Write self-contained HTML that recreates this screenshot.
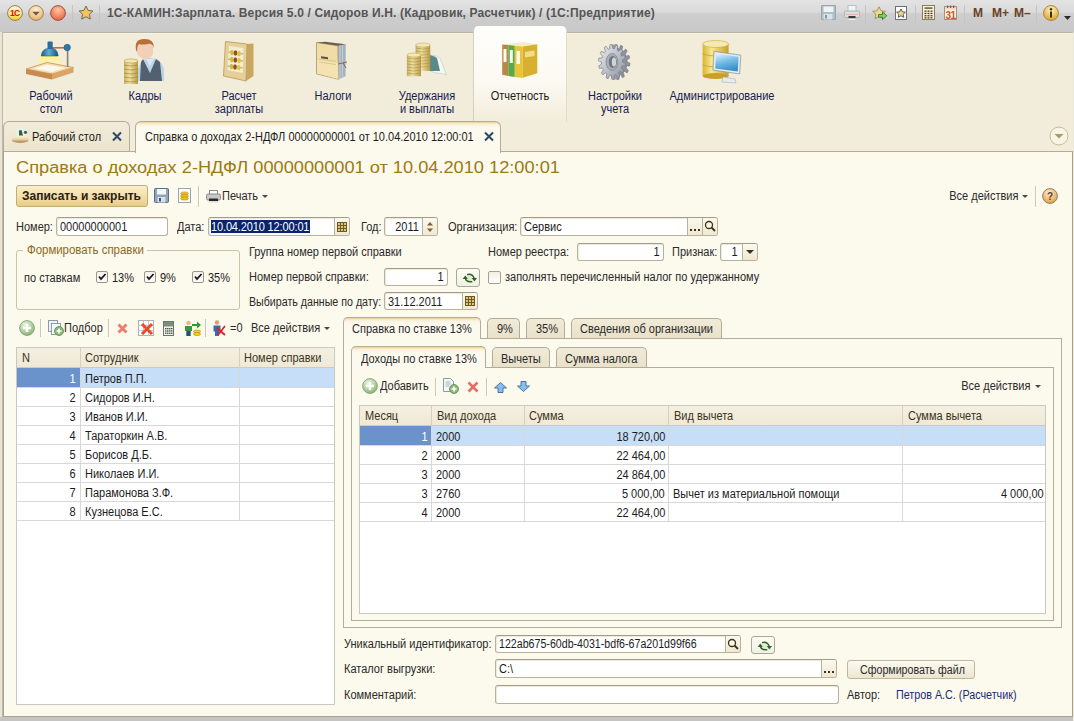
<!DOCTYPE html>
<html><head><meta charset="utf-8">
<style>
*{box-sizing:border-box;margin:0;padding:0}
html,body{width:1074px;height:721px;overflow:hidden;background:#d0d0d0}
body{position:relative;font-family:"Liberation Sans",sans-serif;font-size:11px;color:#1c1c1c}
.a{position:absolute;white-space:nowrap}
svg{position:absolute;overflow:visible}
#titlebar{left:0;top:0;width:1074px;height:32px;background:linear-gradient(#e3e3e3 0,#dadada 12px,#cecece 14px,#c8c8c8 32px)}
#sections{left:0;top:32px;width:1074px;height:90px;background:#f2ecda}
.sec{color:#14204e;font-size:12px;line-height:13px;text-align:center;transform:scaleX(0.917)}
.tsep{position:absolute;top:5px;width:1px;height:18px;background:#f4f4f4;border-left:1px solid #c4c4c4}
</style></head><body>
<!-- TITLE BAR -->
<div id="titlebar" class="a">
 <svg style="left:7px;top:5px" width="16" height="16" viewBox="0 0 16 16">
  <defs><linearGradient id="g1c" x1="0" y1="0" x2="0" y2="1"><stop offset="0" stop-color="#fff8d8"/><stop offset="0.55" stop-color="#fde890"/><stop offset="1" stop-color="#f0d020"/></linearGradient></defs>
  <circle cx="8" cy="8" r="7.4" fill="url(#g1c)" stroke="#8a7048" stroke-width="0.9"/>
  <text x="7.8" y="10.8" font-family="Liberation Sans" font-weight="700" font-size="8.5" fill="#d8100c" text-anchor="middle" letter-spacing="-0.6">1С</text>
 </svg>
 <svg style="left:28px;top:5px" width="16" height="16" viewBox="0 0 16 16">
  <defs><radialGradient id="gdd" cx="50%" cy="30%" r="65%"><stop offset="0" stop-color="#fff2d8"/><stop offset="1" stop-color="#e8b46a"/></radialGradient></defs>
  <circle cx="8" cy="8" r="7.4" fill="url(#gdd)" stroke="#9a7a56" stroke-width="0.9"/>
  <path d="M4.3 6.8h7.4L8 10.6z" fill="#6a5a48"/>
 </svg>
 <svg style="left:50px;top:5px" width="16" height="16" viewBox="0 0 16 16">
  <defs><radialGradient id="grd" cx="50%" cy="30%" r="65%"><stop offset="0" stop-color="#ffc8a8"/><stop offset="1" stop-color="#e86a44"/></radialGradient></defs>
  <circle cx="8" cy="8" r="7.4" fill="url(#grd)" stroke="#9a4a30" stroke-width="0.9"/>
 </svg>
 <div class="tsep" style="left:72px"></div>
 <svg style="left:78px;top:5px" width="16" height="16" viewBox="0 0 16 16">
  <path d="M8 1l2.1 4.4 4.8.6-3.5 3.3.9 4.8L8 11.8 3.7 14.1l.9-4.8L1.1 6l4.8-.6z" fill="#f5c45a" stroke="#6e6a5a" stroke-width="1"/>
 </svg>
 <div class="tsep" style="left:99px"></div>
 <div class="a" style="left:107px;top:6px;font-size:12px;font-weight:700;color:#555555;letter-spacing:0.15px;line-height:14px">1С-КАМИН:Зарплата. Версия 5.0 / Сидоров И.Н. (Кадровик, Расчетчик) / (1С:Предприятие)</div>
 <!-- right icons -->
 <svg style="left:821px;top:5px" width="15" height="15" viewBox="0 0 15 15">
  <rect x="0.5" y="0.5" width="14" height="14" rx="0.5" fill="#aebcc4" stroke="#98a6ae"/>
  <rect x="2.5" y="1.5" width="10" height="5.5" fill="#eef4f6"/>
  <rect x="2.5" y="9" width="9" height="5.5" fill="#dce4e8"/><rect x="4" y="10" width="2" height="3.5" fill="#8a98a0"/>
 </svg>
 <svg style="left:844px;top:5px" width="16" height="15" viewBox="0 0 16 15">
  <rect x="4" y="0.5" width="8" height="6" fill="#f0f6f8" stroke="#b8c0c4"/>
  <rect x="0.5" y="6" width="15" height="6.5" rx="1" fill="#dcdcdc" stroke="#b4b4b4"/>
  <rect x="2" y="9" width="12" height="1" fill="#e8b8b0"/>
  <rect x="4.5" y="11" width="7" height="2.5" fill="#3a3a3a"/><rect x="4.5" y="13.5" width="7" height="1.2" fill="#fff"/>
 </svg>
 <div class="tsep" style="left:865px"></div>
 <svg style="left:872px;top:6px" width="16" height="15" viewBox="0 0 16 15">
  <path d="M7 0.8l2 4 4.4.5-3.2 3 .8 4.4L7 10.5 3 12.6l.8-4.4L.6 5.3l4.4-.5z" fill="#f0d890" stroke="#8a7a4a" stroke-width="0.7"/>
  <path d="M6.5 8.5h4V6l4.3 3.8-4.3 3.8v-2.4h-4z" fill="#7ad860" stroke="#2e6a22" stroke-width="0.8"/>
 </svg>
 <svg style="left:895px;top:6px" width="13" height="15" viewBox="0 0 13 15">
  <rect x="0.5" y="0.5" width="11" height="13" fill="#fff" stroke="#6a6e7a"/>
  <path d="M6 3l1.4 2.8 3 .4-2.2 2.1.6 3L6 9.8l-2.8 1.5.6-3-2.2-2.1 3-.4z" fill="#ecd890" stroke="#3a3830" stroke-width="0.8"/>
 </svg>
 <div class="tsep" style="left:915px"></div>
 <svg style="left:922px;top:5px" width="13" height="15" viewBox="0 0 13 15">
  <rect x="0.5" y="0.5" width="12" height="14" fill="#fcf2d6" stroke="#8a7c62"/>
  <rect x="2.5" y="2.3" width="8" height="1.6" fill="#5a6a3a"/>
  <g fill="#4a3a2a"><rect x="2.5" y="5.5" width="2" height="1.3"/><rect x="5.5" y="5.5" width="2" height="1.3"/><rect x="8.5" y="5.5" width="2" height="1.3"/><rect x="2.5" y="7.8" width="2" height="1.3"/><rect x="5.5" y="7.8" width="2" height="1.3"/><rect x="8.5" y="7.8" width="2" height="1.3"/><rect x="2.5" y="10.1" width="2" height="1.3"/><rect x="5.5" y="10.1" width="2" height="1.3"/><rect x="8.5" y="10.1" width="2" height="1.3"/><rect x="2.5" y="12.2" width="2" height="1.3"/><rect x="5.5" y="12.2" width="2" height="1.3"/><rect x="8.5" y="12.2" width="2" height="1.3"/></g>
 </svg>
 <svg style="left:944px;top:5px" width="13" height="15" viewBox="0 0 13 15">
  <rect x="0.5" y="1.5" width="12" height="13" fill="#fcefe0" stroke="#a8907a"/>
  <rect x="1" y="2" width="11" height="2.5" fill="#f2dcc0"/>
  <g fill="#6a5a40"><rect x="3" y="0.5" width="1.2" height="2.5"/><rect x="6" y="0.5" width="1.2" height="2.5"/><rect x="9" y="0.5" width="1.2" height="2.5"/></g>
  <text x="6.5" y="13.6" font-family="Liberation Sans" font-size="10" font-weight="700" fill="#c8582e" text-anchor="middle" letter-spacing="-0.5">31</text>
 </svg>
 <div class="tsep" style="left:964px"></div>
 <div class="a" style="left:973px;top:6px;font-size:12px;font-weight:700;color:#6a4024;line-height:14px">M</div>
 <div class="a" style="left:992px;top:6px;font-size:12px;font-weight:700;color:#6a4024;line-height:14px">M+</div>
 <div class="a" style="left:1014px;top:6px;font-size:12px;font-weight:700;color:#6a4024;line-height:14px">M&#8211;</div>
 <div class="tsep" style="left:1036px"></div>
 <svg style="left:1043px;top:5px" width="16" height="16" viewBox="0 0 16 16">
  <defs><radialGradient id="gin" cx="50%" cy="30%" r="65%"><stop offset="0" stop-color="#fff4c0"/><stop offset="1" stop-color="#e0a830"/></radialGradient></defs>
  <circle cx="8" cy="8" r="7.5" fill="url(#gin)" stroke="#a07a30" stroke-width="0.8"/>
  <circle cx="8" cy="4.3" r="1.2" fill="#3a2a10"/><rect x="7" y="6.5" width="2" height="6" fill="#3a2a10"/>
 </svg>
 <svg style="left:1064px;top:16px" width="7" height="4" viewBox="0 0 7 4"><path d="M0 0h7L3.5 4z" fill="#2a2a2a"/></svg>
</div>
<!-- SECTIONS PANEL -->
<div id="sections" class="a">
 <div class="a" style="left:0;top:0;width:1074px;height:1px;background:#b9b5a9"></div><div class="a" style="left:0;top:1px;width:1074px;height:1px;background:#f8f3e2"></div>
 <div class="a" style="left:473px;top:-6px;width:94px;height:96px;border-radius:5px 5px 0 0;background:linear-gradient(#fefefb,#fbf9f1 60%,#f2ecda);border-left:1px solid #d4cfc0;border-right:1px solid #e2dccb"></div>
 <!-- desk lamp -->
 <svg style="left:20px;top:3px" width="60" height="50" viewBox="0 0 60 50">
  <defs><linearGradient id="lampl" x1="0" y1="0" x2="0" y2="1"><stop offset="0" stop-color="#fff27a" stop-opacity="0.95"/><stop offset="1" stop-color="#fff8c8" stop-opacity="0.3"/></linearGradient>
  <linearGradient id="shade" x1="0" y1="0" x2="1" y2="0"><stop offset="0" stop-color="#1e5a88"/><stop offset="0.45" stop-color="#5ab0d8"/><stop offset="1" stop-color="#1a5078"/></linearGradient></defs>
  <path d="M21 21 H38 L46 33 H14z" fill="url(#lampl)"/>
  <path d="M6 34 L27 27.5 L53.5 32.5 L32 39z" fill="#f3dcb4" stroke="#c8945a" stroke-width="0.8"/>
  <path d="M14 33.5 L27 29.5 L45 33 L32 37z" fill="#fdf8ea"/>
  <path d="M6 34 L32 39 L32 44.5 L6 39z" fill="#c98a4e"/>
  <path d="M32 39 L53.5 32.5 L53.5 37.5 L32 44.5z" fill="#dba464"/>
  <rect x="46.8" y="13" width="1.6" height="19" fill="#8a8070"/>
  <rect x="32" y="12" width="13" height="1.6" fill="#b86a5a"/>
  <circle cx="47.2" cy="12.5" r="3.2" fill="#2e78a8" stroke="#1a5680" stroke-width="0.6"/>
  <rect x="27.5" y="6.5" width="5.2" height="8" rx="1" fill="#2a6c9c"/>
  <path d="M21.2 21 Q22 14 27.5 13.5 H32.7 Q37.5 14 38.2 21 Z" fill="url(#shade)" stroke="#1a5078" stroke-width="0.5"/>
 </svg>
 <div class="a sec" style="left:-19.5px;top:58px;width:140px">Рабочий<br>стол</div>
 <!-- kadry -->
 <svg style="left:115px;top:3px" width="55" height="55" viewBox="0 0 55 55">
  <defs><linearGradient id="coin" x1="0" y1="0" x2="1" y2="0"><stop offset="0" stop-color="#c8b060"/><stop offset="0.4" stop-color="#f0e0a0"/><stop offset="1" stop-color="#b89a48"/></linearGradient></defs>
  <path d="M23 34 Q26 23 35 23 Q46 23 49 34 V46 H23z" fill="#bcd4ea"/>
  <path d="M28 24 L35 38 L41 24 L45 27 L47 46 H25 L26 27z" fill="#526070"/>
  <path d="M31 24 L35 31 L39 24z" fill="#dce8f4"/>
  <path d="M22 11 Q22 4 30 4.5 Q38 5 38 12 V19 Q36 24 30 24 Q24 23 22 18z" fill="#f2cfb6"/>
  <path d="M21 15 Q19 4 29 4 Q39 3.5 39 13 Q37 8 33 9 Q27 10 24 9 Q22 11 22 17z" fill="#b8703a"/>
  <rect x="9" y="26" width="14" height="23" fill="url(#coin)"/>
  <g fill="none" stroke="#a08838" stroke-width="0.7"><path d="M9 30 Q16 32 23 30"/><path d="M9 34 Q16 36 23 34"/><path d="M9 38 Q16 40 23 38"/><path d="M9 42 Q16 44 23 42"/><path d="M9 46 Q16 48 23 46"/></g>
  <ellipse cx="16" cy="26" rx="7" ry="2" fill="#f2e6b0" stroke="#b09a50" stroke-width="0.6"/>
 </svg>
 <div class="a sec" style="left:75.0px;top:58px;width:140px">Кадры</div>
 <!-- abacus -->
 <svg style="left:212px;top:3px" width="55" height="55" viewBox="0 0 55 55">
  <path d="M35 9 L41.5 8.5 L41.5 41 L34 46z" fill="#c8a860"/>
  <path d="M13.5 6.5 L35 9 L34 46 L11.5 41z" fill="#e6cf98" stroke="#b8984e" stroke-width="0.8"/>
  <path d="M17 11 L31.5 13 L30.8 38 L15.5 35z" fill="#f6ecd0"/>
  <g stroke="#a88850" stroke-width="0.8"><line x1="16.5" y1="17" x2="31.3" y2="19"/><line x1="16" y1="24" x2="31" y2="26"/><line x1="15.8" y1="31" x2="30.8" y2="33"/></g>
  <g><ellipse cx="20" cy="17.5" rx="1.8" ry="2.8" fill="#c8c040"/><ellipse cx="23.5" cy="18" rx="1.8" ry="2.8" fill="#9a4a2a"/><ellipse cx="27" cy="18.5" rx="1.8" ry="2.8" fill="#d8c848"/>
  <ellipse cx="19.8" cy="24.5" rx="1.8" ry="2.8" fill="#c8c040"/><ellipse cx="23.3" cy="25" rx="1.8" ry="2.8" fill="#9a4a2a"/><ellipse cx="27" cy="25.5" rx="1.8" ry="2.8" fill="#d8c848"/>
  <ellipse cx="19.5" cy="31.5" rx="1.8" ry="2.8" fill="#c8c040"/><ellipse cx="23" cy="32" rx="1.8" ry="2.8" fill="#9a4a2a"/><ellipse cx="26.8" cy="32.5" rx="1.8" ry="2.8" fill="#d8c848"/></g>
 </svg>
 <div class="a sec" style="left:168.5px;top:58px;width:140px">Расчет<br>зарплаты</div>
 <!-- nalogi folder -->
 <svg style="left:305px;top:3px" width="55" height="55" viewBox="0 0 55 55">
  <path d="M32.8 10.7 L40.8 9.2 L40.5 41.2 L33.6 44.3z" fill="#a4b2c0"/>
  <g stroke="#d8e0e8" stroke-width="0.6"><line x1="35" y1="11" x2="35" y2="43"/><line x1="37.5" y1="10.5" x2="37.5" y2="42"/></g>
  <path d="M11.5 7.6 L32.8 10.7 L33.6 44.3 L11.5 38.9z" fill="#f0dca4" stroke="#9a8a60" stroke-width="0.7"/>
  <path d="M11.5 7.6 L32.8 10.7 L40.8 9.2 L20 6.8z" fill="#6a6050"/>
  <path d="M12 25 L33 28 L33.4 44 L12 38.5z" fill="#f4e2b0"/>
  <rect x="16" y="19" width="7" height="2" fill="#5a5040" transform="skewY(8)"/>
  <g stroke="#c8b488" stroke-width="0.6"><line x1="14" y1="24" x2="31" y2="26.5"/><line x1="14" y1="27" x2="31" y2="29.5"/></g>
  <path d="M33 29 L42 27 M38 28 L41 33" stroke="#8a6a40" stroke-width="1"/>
 </svg>
 <div class="a sec" style="left:263.0px;top:58px;width:140px">Налоги</div>
 <!-- coins -->
 <svg style="left:400px;top:3px" width="55" height="55" viewBox="0 0 55 55">
  <path d="M30 20 Q36 20 40 23 L46.5 40 Q42 38 36 38 L30 36z" fill="#f4f8f4" stroke="#b8c8c0" stroke-width="0.6"/>
  <path d="M30 20 Q34 21 37 23 L40 36 L30 36z" fill="#5a8a88"/>
  <rect x="15.6" y="10" width="14.6" height="25.9" fill="url(#coin)"/>
  <g fill="none" stroke="#a89040" stroke-width="0.6"><path d="M15.6 13 Q23 15 30.2 13"/><path d="M15.6 16 Q23 18 30.2 16"/><path d="M15.6 19 Q23 21 30.2 19"/><path d="M15.6 22 Q23 24 30.2 22"/><path d="M15.6 25 Q23 27 30.2 25"/><path d="M15.6 28 Q23 30 30.2 28"/><path d="M15.6 31 Q23 33 30.2 31"/></g>
  <ellipse cx="22.9" cy="10" rx="7.3" ry="2" fill="#f4e8b8" stroke="#b8a050" stroke-width="0.5"/>
  <rect x="6.9" y="20" width="14.1" height="21.2" fill="url(#coin)"/>
  <g fill="none" stroke="#a89040" stroke-width="0.6"><path d="M6.9 23 Q14 25 21 23"/><path d="M6.9 26 Q14 28 21 26"/><path d="M6.9 29 Q14 31 21 29"/><path d="M6.9 32 Q14 34 21 32"/><path d="M6.9 35 Q14 37 21 35"/><path d="M6.9 38 Q14 40 21 38"/></g>
  <ellipse cx="14" cy="20" rx="7" ry="2" fill="#f4e8b8" stroke="#b8a050" stroke-width="0.5"/>
 </svg>
 <div class="a sec" style="left:356.5px;top:58px;width:140px">Удержания<br>и выплаты</div>
 <!-- otchetnost binders -->
 <svg style="left:493px;top:3px" width="55" height="55" viewBox="0 0 55 55">
  <path d="M9.2 9.5 L30 7 L44.3 9.2 L29.8 11.5z" fill="#f4ecc8"/>
  <path d="M9.2 9.5 L15.3 10 L15.3 41 L9.2 39.7z" fill="#b88848"/>
  <rect x="10.5" y="14" width="3" height="13" fill="#fbf8ee"/>
  <path d="M15.3 10 L21.8 10.8 L21.8 42 L15.3 41z" fill="#5aa84a"/>
  <rect x="16.8" y="15" width="3" height="13" fill="#f4faf0"/>
  <path d="M21.8 10.8 L29.8 11.5 L29.8 43 L21.8 42z" fill="#e8c43a"/>
  <rect x="23.5" y="16" width="3.5" height="13" fill="#fcf8e8"/>
  <path d="M29.8 11.5 L44.3 9.2 L44.3 38.2 L29.8 42.7z" fill="#d8b030"/>
  <path d="M32 17 L41.5 15.5 L41.5 21 L32 22.5z" fill="#f0dc8a"/>
 </svg>
 <div class="a sec" style="left:450.3px;top:58px;width:140px;color:#1a1a1a">Отчетность</div>
 <!-- gear -->
 <svg style="left:590px;top:3px" width="55" height="55" viewBox="0 0 55 55">
  <defs><linearGradient id="gearg" x1="0" y1="0" x2="1" y2="1"><stop offset="0" stop-color="#eceef2"/><stop offset="0.6" stop-color="#b4b8c2"/><stop offset="1" stop-color="#8a8e98"/></linearGradient></defs>
  <path d="M37.1 27.0 L40.0 28.2 L39.7 30.9 L36.7 30.9 L36.1 32.9 L38.3 35.6 L37.2 37.9 L34.5 36.2 L33.3 37.7 L34.4 41.4 L32.6 42.8 L30.8 39.7 L29.3 40.3 L29.0 44.3 L27.0 44.5 L26.3 40.6 L24.7 40.3 L23.3 43.8 L21.4 42.8 L22.0 38.9 L20.7 37.7 L18.2 39.9 L16.8 37.9 L18.7 34.8 L17.9 32.9 L14.9 33.5 L14.3 30.9 L17.0 29.1 L16.9 27.0 L14.0 25.8 L14.3 23.1 L17.3 23.1 L17.9 21.1 L15.7 18.4 L16.8 16.1 L19.5 17.8 L20.7 16.3 L19.6 12.6 L21.4 11.2 L23.2 14.3 L24.7 13.7 L25.0 9.7 L27.0 9.5 L27.7 13.4 L29.3 13.7 L30.7 10.2 L32.6 11.2 L32.0 15.1 L33.3 16.3 L35.8 14.1 L37.2 16.1 L35.3 19.2 L36.1 21.1 L39.1 20.5 L39.7 23.1 L37.0 24.9z" fill="#8e929c" stroke="#6e727c" stroke-width="0.6"/>
  <rect x="22" y="9.5" width="5" height="35" fill="#9a9ea8"/>
  <path d="M32.5 27.0 L35.5 28.2 L35.2 30.9 L32.1 30.9 L31.5 32.9 L33.7 35.6 L32.6 37.9 L29.8 36.2 L28.6 37.7 L29.7 41.4 L27.9 42.8 L25.9 39.7 L24.3 40.3 L24.1 44.3 L22.0 44.5 L21.3 40.6 L19.7 40.3 L18.1 43.8 L16.1 42.8 L16.8 38.9 L15.4 37.7 L12.9 39.9 L11.4 37.9 L13.3 34.8 L12.5 32.9 L9.5 33.5 L8.8 30.9 L11.6 29.1 L11.5 27.0 L8.5 25.8 L8.8 23.1 L11.9 23.1 L12.5 21.1 L10.3 18.4 L11.4 16.1 L14.2 17.8 L15.4 16.3 L14.3 12.6 L16.1 11.2 L18.1 14.3 L19.7 13.7 L19.9 9.7 L22.0 9.5 L22.7 13.4 L24.3 13.7 L25.9 10.2 L27.9 11.2 L27.2 15.1 L28.6 16.3 L31.1 14.1 L32.6 16.1 L30.7 19.2 L31.5 21.1 L34.5 20.5 L35.2 23.1 L32.4 24.9z" fill="url(#gearg)" stroke="#7a7e88" stroke-width="0.7"/>
  <ellipse cx="22" cy="27" rx="6" ry="8.5" fill="#a8acb4" stroke="#7a7e86" stroke-width="0.6"/>
  <ellipse cx="22.8" cy="27" rx="4" ry="6" fill="#70747c"/>
  <ellipse cx="24" cy="27" rx="2.2" ry="4.5" fill="#d0d4da"/>
 </svg>
 <div class="a sec" style="left:545.0px;top:58px;width:140px">Настройки<br>учета</div>
 <!-- admin db+monitor -->
 <svg style="left:695px;top:3px" width="55" height="55" viewBox="0 0 55 55">
  <defs><linearGradient id="dbg" x1="0" y1="0" x2="1" y2="0"><stop offset="0" stop-color="#d8b430"/><stop offset="0.35" stop-color="#f8e890"/><stop offset="1" stop-color="#c8a028"/></linearGradient>
  <linearGradient id="scr" x1="0" y1="0" x2="0.3" y2="1"><stop offset="0" stop-color="#e8f4fc"/><stop offset="0.5" stop-color="#78c0e8"/><stop offset="1" stop-color="#3a90c8"/></linearGradient></defs>
  <rect x="7.6" y="9" width="26" height="32" fill="url(#dbg)"/>
  <ellipse cx="20.6" cy="41" rx="13" ry="3" fill="#c8a028"/>
  <g fill="none" stroke="#c8a030" stroke-width="0.8"><path d="M7.6 19 Q20.6 23 33.6 19"/><path d="M7.6 30 Q20.6 34 33.6 30"/></g>
  <ellipse cx="20.6" cy="9" rx="13" ry="3.5" fill="#f6eab0" stroke="#c8a838" stroke-width="0.6"/>
  <path d="M28 42 L40 44 L41 48 L27 47z" fill="#e8ecee" stroke="#a8b0b6" stroke-width="0.6"/>
  <path d="M19 16.4 L45.8 20.2 L44.7 38.9 L17.9 35.1z" fill="#e6ecf0" stroke="#8a98a4" stroke-width="0.8"/>
  <path d="M21 18.6 L43.6 21.8 L42.8 36.6 L20.2 33.4z" fill="url(#scr)"/>
 </svg>
 <div class="a sec" style="left:652.0px;top:58px;width:140px">Администрирование</div>
</div>
<!-- TABS BAR -->
<div class="a" style="left:0;top:122px;width:1074px;height:30px;background:#f2ecda"></div>
<div class="a" style="left:3px;top:121px;width:127px;height:31px;border:1px solid #b2ac99;border-bottom:none;border-radius:6px 6px 0 0;background:linear-gradient(#f1ebd9,#ece4cd)"></div>
<svg style="left:8px;top:126px" width="24" height="20" viewBox="0 0 24 20">
 <defs><linearGradient id="t1b" x1="0" y1="0" x2="0" y2="1"><stop offset="0" stop-color="#fff4c8"/><stop offset="0.5" stop-color="#e8cc98"/><stop offset="1" stop-color="#9a7848"/></linearGradient></defs>
 <rect x="8" y="2" width="11" height="8" rx="2" fill="#e4f2e8" opacity="0.9"/>
 <path d="M11 4.5 L13.5 4 L15 9.5 L11 9.5z" fill="#3a5a4a"/><circle cx="17.5" cy="6.3" r="1.6" fill="#4a5a52"/>
 <path d="M4 13 Q12 9.5 20 11 Q21 14 20 15.5 Q12 18 4.5 15.5 Q3.5 14.5 4 13z" fill="url(#t1b)"/>
</svg>
<div class="a" style="left:32px;top:131px;font-size:12px;line-height:13px;color:#1c1c1c;transform:scaleX(0.917);transform-origin:left top">Рабочий стол</div>
<svg style="left:112px;top:132px" width="10" height="9" viewBox="0 0 10 9"><path d="M1 0.5 L9 8.5 M9 0.5 L1 8.5" stroke="#2a4868" stroke-width="2"/></svg>
<div class="a" style="left:135px;top:121px;width:366px;height:32px;border:1px solid #b2ac99;border-bottom:none;border-radius:6px 6px 0 0;background:linear-gradient(#e9c98a 0,#f5e4b8 1px,#faf3df 3px,#fcf9ee 6px)"></div>
<div class="a" style="left:145px;top:131px;font-size:12px;line-height:13px;color:#1c1c1c;transform:scaleX(0.917);transform-origin:left top">Справка о доходах 2-НДФЛ 00000000001 от 10.04.2010 12:00:01</div>
<svg style="left:484px;top:132px" width="10" height="9" viewBox="0 0 10 9"><path d="M1 0.5 L9 8.5 M9 0.5 L1 8.5" stroke="#2a4868" stroke-width="2"/></svg>
<svg style="left:1049px;top:126px" width="20" height="20" viewBox="0 0 20 20"><circle cx="10" cy="10" r="9" fill="#f8f4e4" stroke="#c8bc98" stroke-width="1"/><path d="M5.5 8h9L10 12.5z" fill="#a89a6a"/></svg>
<div class="a" style="left:3px;top:151px;width:1070px;height:566px;background:#fcf9ed;border:1px solid #a8a08a;border-top-color:#b2ac99;box-shadow:inset 1px 0 0 #fff"></div>
<div class="a" style="left:135px;top:151px;width:366px;height:2px;background:#fcf9ee;border-left:1px solid #b2ac99;border-right:1px solid #b2ac99"></div>
<div class="a" style="left:0;top:717px;width:1074px;height:4px;background:#c4c4c4"></div>
<div class="a" style="left:1073px;top:32px;width:1px;height:689px;background:#ebe7d9"></div>
<div class="a" style="left:0;top:32px;width:3px;height:685px;background:#e9e4d4;border-right:1px solid #bfb9ab"></div>
<div class="a" style="top:159px;font-size:16px;line-height:18px;color:#9c7a14;transform:scaleX(1.138);transform-origin:left top;left:16px;">Справка о доходах 2-НДФЛ 00000000001 от 10.04.2010 12:00:01</div>
<div class="a" style="left:16px;top:185px;width:132px;height:22px;border:1px solid #c4ad73;border-radius:3px;background:linear-gradient(#fbeed0,#f1dca4 60%,#e9cd86)"></div>
<div class="a" style="top:189px;font-size:12px;line-height:14px;color:#2a2010;font-weight:700;left:22px;">Записать и закрыть</div>
<svg style="left:154px;top:188px" width="15" height="15" viewBox="0 0 15 15"><rect x="0.5" y="0.5" width="14" height="14" rx="1" fill="#90a6b8" stroke="#5a6e84"/><rect x="3" y="1" width="9" height="5.5" fill="#f2f6f8"/><rect x="3.5" y="9" width="8" height="5.5" fill="#d8e0e6"/><rect x="5" y="10" width="2" height="3.5" fill="#3e5a78"/></svg>
<svg style="left:178px;top:188px" width="13" height="15" viewBox="0 0 13 15"><rect x="0.5" y="0.5" width="12" height="14" fill="#fdfcf6" stroke="#9aa4b0"/><ellipse cx="6.5" cy="5.5" rx="3.8" ry="1.6" fill="#f0c020" stroke="#b88a10" stroke-width="0.6"/><ellipse cx="6.5" cy="8" rx="3.8" ry="1.6" fill="#f0c020" stroke="#b88a10" stroke-width="0.6"/><ellipse cx="6.5" cy="10.5" rx="3.8" ry="1.6" fill="#f0c020" stroke="#b88a10" stroke-width="0.6"/></svg>
<div class="a" style="left:198px;top:186px;width:2px;height:21px;border-left:1px solid #cdc6b2;border-right:1px solid #fffefa"></div>
<svg style="left:206px;top:190px" width="15" height="13" viewBox="0 0 15 13"><rect x="3.5" y="0.5" width="8" height="4" fill="#fff" stroke="#8a8a8a"/><rect x="0.5" y="4" width="14" height="6" rx="1.5" fill="#c8c8c8" stroke="#8a8a8a"/><rect x="3" y="8.5" width="9" height="3" fill="#2a2a2a"/><rect x="3" y="11" width="9" height="1.5" fill="#ddd"/></svg>
<div class="a" style="top:189px;font-size:12px;line-height:14px;color:#2a2a2a;transform:scaleX(0.917);transform-origin:left top;left:222px;">Печать</div>
<svg style="left:262px;top:195px" width="6" height="3" viewBox="0 0 6 3"><path d="M0 0h6L3 3z" fill="#4a4a4a"/></svg>
<div class="a" style="top:189px;font-size:12px;line-height:14px;color:#2a2a2a;transform:scaleX(0.917);transform-origin:right top;right:56px;">Все действия</div>
<svg style="left:1022px;top:195px" width="6" height="3" viewBox="0 0 6 3"><path d="M0 0h6L3 3z" fill="#4a4a4a"/></svg>
<div class="a" style="left:1035px;top:186px;width:2px;height:21px;border-left:1px solid #cdc6b2;border-right:1px solid #fffefa"></div>
<svg style="left:1042px;top:188px" width="16" height="16" viewBox="0 0 16 16"><defs><radialGradient id="ghelp" cx="45%" cy="30%" r="65%"><stop offset="0" stop-color="#fff0c8"/><stop offset="1" stop-color="#e0a850"/></radialGradient></defs><circle cx="8" cy="8" r="7.4" fill="url(#ghelp)" stroke="#8a7456" stroke-width="0.9"/><text x="8" y="12" font-family="Liberation Sans" font-weight="700" font-size="10" fill="#5e3444" text-anchor="middle">?</text></svg>
<div class="a" style="top:220px;font-size:12px;line-height:14px;color:#2a2a2a;transform:scaleX(0.917);transform-origin:left top;left:16px;">Номер:</div>
<div class="a" style="left:56px;top:217px;width:112px;height:19px;border:1px solid #b9b19a;border-top-color:#a39b84;border-radius:3px;background:#fff;box-shadow:inset 1px 1px 1px #ece8dc"></div>
<div class="a" style="top:220px;font-size:12px;line-height:14px;color:#1c1c1c;transform:scaleX(0.917);transform-origin:left top;left:60px;">00000000001</div>
<div class="a" style="top:220px;font-size:12px;line-height:14px;color:#2a2a2a;transform:scaleX(0.917);transform-origin:left top;left:177px;">Дата:</div>
<div class="a" style="left:208px;top:217px;width:142px;height:19px;border:1px solid #b9b19a;border-top-color:#a39b84;border-radius:3px;background:#fff;box-shadow:inset 1px 1px 1px #ece8dc"></div>
<div class="a" style="left:211px;top:220px;width:99px;height:13px;background:#0a246a"></div>
<div class="a" style="top:220px;font-size:12px;line-height:14px;color:#fff;letter-spacing:-0.15px;transform:scaleX(0.917);transform-origin:left top;left:211px;">10.04.2010 12:00:01</div>
<div class="a" style="left:334px;top:218px;width:15px;height:17px;border-left:1px solid #b9b19a;background:linear-gradient(#fbf8ee,#efe8d2);border-radius:0 2px 2px 0;"></div>
<svg style="left:337px;top:222px" width="10" height="10" viewBox="0 0 10 10"><rect x="0.5" y="0.5" width="9" height="9" fill="#dcc47a" stroke="#6e5a22"/><path d="M0.5 3.5h9M0.5 6.5h9M3.5 0.5v9M6.5 0.5v9" stroke="#6e5a22" stroke-width="1"/></svg>
<div class="a" style="top:220px;font-size:12px;line-height:14px;color:#2a2a2a;transform:scaleX(0.917);transform-origin:left top;left:361px;">Год:</div>
<div class="a" style="left:384px;top:217px;width:54px;height:19px;border:1px solid #b9b19a;border-top-color:#a39b84;border-radius:3px;background:#fff;box-shadow:inset 1px 1px 1px #ece8dc"></div>
<div class="a" style="top:220px;font-size:12px;line-height:14px;color:#1c1c1c;transform:scaleX(0.917);transform-origin:right top;right:655px;">2011</div>
<div class="a" style="left:422px;top:218px;width:15px;height:17px;border-left:1px solid #b9b19a;background:linear-gradient(#fbf8ee,#efe8d2);border-radius:0 2px 2px 0;"></div>
<svg style="left:426px;top:221px" width="8" height="12" viewBox="0 0 8 12"><path d="M1 4.5h6L4 1z" fill="#7a6030"/><path d="M1 7.5h6L4 11z" fill="#7a6030"/></svg>
<div class="a" style="top:220px;font-size:12px;line-height:14px;color:#2a2a2a;transform:scaleX(0.917);transform-origin:left top;left:448px;">Организация:</div>
<div class="a" style="left:520px;top:217px;width:198px;height:19px;border:1px solid #b9b19a;border-top-color:#a39b84;border-radius:3px;background:#fff;box-shadow:inset 1px 1px 1px #ece8dc"></div>
<div class="a" style="top:220px;font-size:12px;line-height:14px;color:#1c1c1c;transform:scaleX(0.917);transform-origin:left top;left:524px;">Сервис</div>
<div class="a" style="left:687px;top:218px;width:15px;height:17px;border-left:1px solid #b9b19a;background:linear-gradient(#fbf8ee,#efe8d2);"></div>
<div class="a" style="left:702px;top:218px;width:15px;height:17px;border-left:1px solid #b9b19a;background:linear-gradient(#fbf8ee,#efe8d2);border-radius:0 2px 2px 0;"></div>
<svg style="left:689px;top:229px" width="12" height="3" viewBox="0 0 12 3"><rect x="1" y="0" width="2" height="2" fill="#3a3020"/><rect x="5" y="0" width="2" height="2" fill="#3a3020"/><rect x="9" y="0" width="2" height="2" fill="#3a3020"/></svg>
<svg style="left:704px;top:220px" width="12" height="12" viewBox="0 0 12 12"><circle cx="5" cy="5" r="3.5" fill="#fff8e0" stroke="#3a3020" stroke-width="1.3"/><path d="M7.5 7.5 L11 11" stroke="#3a3020" stroke-width="1.8"/></svg>
<div class="a" style="left:16px;top:250px;width:224px;height:60px;border:1px solid #cdc4a8;border-radius:3px"></div>
<div class="a" style="left:23px;top:245px;width:124px;height:11px;background:#fcf9ed"></div>
<div class="a" style="top:243px;font-size:12px;line-height:14px;color:#8a6a1c;transform:scaleX(0.9518460000000001);transform-origin:left top;left:27px;">Формировать справки</div>
<div class="a" style="top:271px;font-size:12px;line-height:14px;color:#2a2a2a;transform:scaleX(0.917);transform-origin:left top;left:24px;">по ставкам</div>
<div class="a" style="left:96px;top:271px;width:12px;height:12px;border:1px solid #9a9482;border-radius:2px;background:linear-gradient(#f4f2ea,#fff)"></div>
<svg style="left:96px;top:271px" width="12" height="12" viewBox="0 0 12 12"><path d="M3 5.5 L5 8 L9.5 3" fill="none" stroke="#1a1a30" stroke-width="1.8"/></svg>
<div class="a" style="top:271px;font-size:12px;line-height:14px;color:#1c1c1c;transform:scaleX(0.917);transform-origin:left top;left:112px;">13%</div>
<div class="a" style="left:144px;top:271px;width:12px;height:12px;border:1px solid #9a9482;border-radius:2px;background:linear-gradient(#f4f2ea,#fff)"></div>
<svg style="left:144px;top:271px" width="12" height="12" viewBox="0 0 12 12"><path d="M3 5.5 L5 8 L9.5 3" fill="none" stroke="#1a1a30" stroke-width="1.8"/></svg>
<div class="a" style="top:271px;font-size:12px;line-height:14px;color:#1c1c1c;transform:scaleX(0.917);transform-origin:left top;left:160px;">9%</div>
<div class="a" style="left:192px;top:271px;width:12px;height:12px;border:1px solid #9a9482;border-radius:2px;background:linear-gradient(#f4f2ea,#fff)"></div>
<svg style="left:192px;top:271px" width="12" height="12" viewBox="0 0 12 12"><path d="M3 5.5 L5 8 L9.5 3" fill="none" stroke="#1a1a30" stroke-width="1.8"/></svg>
<div class="a" style="top:271px;font-size:12px;line-height:14px;color:#1c1c1c;transform:scaleX(0.917);transform-origin:left top;left:208px;">35%</div>
<div class="a" style="top:245px;font-size:12px;line-height:14px;color:#2a2a2a;transform:scaleX(0.917);transform-origin:left top;left:249px;">Группа номер первой справки</div>
<div class="a" style="top:270px;font-size:12px;line-height:14px;color:#2a2a2a;transform:scaleX(0.917);transform-origin:left top;left:249px;">Номер первой справки:</div>
<div class="a" style="left:384px;top:268px;width:64px;height:18px;border:1px solid #b9b19a;border-top-color:#a39b84;border-radius:3px;background:#fff;box-shadow:inset 1px 1px 1px #ece8dc"></div>
<div class="a" style="top:270px;font-size:12px;line-height:14px;color:#1c1c1c;transform:scaleX(0.917);transform-origin:right top;right:630px;">1</div>
<div class="a" style="left:456px;top:268px;width:24px;height:19px;border:1px solid #aaa69a;border-radius:3px;background:linear-gradient(#fbfcf4,#eef2e2)"></div>
<svg style="left:461.5px;top:272.0px" width="15" height="12" viewBox="0 0 15 12"><ellipse cx="7.5" cy="6" rx="3.5" ry="3.2" fill="#d8f0c8"/><path d="M5 2.6 Q10.5 1.2 12.3 6.5" fill="none" stroke="#3a5a2a" stroke-width="1.4"/><path d="M9.8 6 H15 L12.4 9.6z" fill="#3a5a2a"/><path d="M3.4 6.5 Q4.5 10.6 10.3 9.6" fill="none" stroke="#3a5a2a" stroke-width="1.4"/><path d="M0.6 7 H5.8 L3.3 3.6z" fill="#3a5a2a"/></svg>
<div class="a" style="top:295px;font-size:12px;line-height:14px;color:#2a2a2a;transform:scaleX(0.887656);transform-origin:left top;left:249px;">Выбирать данные по дату:</div>
<div class="a" style="left:384px;top:292px;width:94px;height:18px;border:1px solid #b9b19a;border-top-color:#a39b84;border-radius:3px;background:#fff;box-shadow:inset 1px 1px 1px #ece8dc"></div>
<div class="a" style="top:295px;font-size:12px;line-height:14px;color:#1c1c1c;transform:scaleX(0.917);transform-origin:left top;left:388px;">31.12.2011</div>
<div class="a" style="left:462px;top:293px;width:15px;height:16px;border-left:1px solid #b9b19a;background:linear-gradient(#fbf8ee,#efe8d2);border-radius:0 2px 2px 0;"></div>
<svg style="left:465px;top:296px" width="10" height="10" viewBox="0 0 10 10"><rect x="0.5" y="0.5" width="9" height="9" fill="#dcc47a" stroke="#6e5a22"/><path d="M0.5 3.5h9M0.5 6.5h9M3.5 0.5v9M6.5 0.5v9" stroke="#6e5a22" stroke-width="1"/></svg>
<div class="a" style="top:245px;font-size:12px;line-height:14px;color:#2a2a2a;transform:scaleX(0.917);transform-origin:left top;left:488px;">Номер реестра:</div>
<div class="a" style="left:577px;top:243px;width:87px;height:18px;border:1px solid #b9b19a;border-top-color:#a39b84;border-radius:3px;background:#fff;box-shadow:inset 1px 1px 1px #ece8dc"></div>
<div class="a" style="top:245px;font-size:12px;line-height:14px;color:#1c1c1c;transform:scaleX(0.917);transform-origin:right top;right:414px;">1</div>
<div class="a" style="top:245px;font-size:12px;line-height:14px;color:#2a2a2a;transform:scaleX(0.917);transform-origin:left top;left:672px;">Признак:</div>
<div class="a" style="left:720px;top:243px;width:38px;height:18px;border:1px solid #b9b19a;border-top-color:#a39b84;border-radius:3px;background:#fff;box-shadow:inset 1px 1px 1px #ece8dc"></div>
<div class="a" style="top:245px;font-size:12px;line-height:14px;color:#1c1c1c;transform:scaleX(0.917);transform-origin:right top;right:336px;">1</div>
<div class="a" style="left:742px;top:244px;width:15px;height:16px;border-left:1px solid #b9b19a;background:linear-gradient(#fbf8ee,#efe8d2);border-radius:0 2px 2px 0;"></div>
<svg style="left:746px;top:250px" width="8" height="4" viewBox="0 0 8 4"><path d="M0 0h8L4 4z" fill="#3a3020"/></svg>
<div class="a" style="left:488px;top:271px;width:13px;height:13px;border:1px solid #a8a08a;border-radius:2px;background:linear-gradient(#f2efe4,#fff)"></div>
<div class="a" style="top:270px;font-size:12px;line-height:14px;color:#2a2a2a;transform:scaleX(0.917);transform-origin:left top;left:505px;">заполнять перечисленный налог по удержанному</div>
<svg style="left:19px;top:320px" width="16" height="16" viewBox="0 0 16 16"><defs><radialGradient id="gp19" cx="40%" cy="30%" r="70%"><stop offset="0" stop-color="#eef6e6"/><stop offset="1" stop-color="#8cb87a"/></radialGradient></defs><circle cx="8" cy="8" r="7.4" fill="url(#gp19)" stroke="#7a9a6a" stroke-width="0.8"/><path d="M8 4v8M4 8h8" stroke="#fff" stroke-width="2.4"/></svg>
<div class="a" style="left:40px;top:319px;width:2px;height:18px;border-left:1px solid #cdc6b2;border-right:1px solid #fffefa"></div>
<svg style="left:48px;top:320px" width="16" height="16" viewBox="0 0 16 16"><rect x="0.5" y="0.5" width="9" height="11" fill="#eef2f6" stroke="#8a9ab0"/><rect x="3.5" y="3.5" width="9" height="11" fill="#f8fafc" stroke="#8a9ab0"/><circle cx="11" cy="11" r="4.5" fill="#8ab878" stroke="#5a8a4a" stroke-width="0.8"/><path d="M11 8.5v5M8.5 11h5" stroke="#fff" stroke-width="1.6"/></svg>
<div class="a" style="top:321px;font-size:12px;line-height:14px;color:#2a2a2a;transform:scaleX(0.917);transform-origin:left top;left:64px;">Подбор</div>
<div class="a" style="left:108px;top:319px;width:2px;height:18px;border-left:1px solid #cdc6b2;border-right:1px solid #fffefa"></div>
<svg style="left:117px;top:323px" width="11" height="11" viewBox="0 0 11 11"><path d="M1.5 1.5 L9.5 9.5 M9.5 1.5 L1.5 9.5" stroke="#e88070" stroke-width="3"/></svg>
<svg style="left:138px;top:320px" width="16" height="16" viewBox="0 0 16 16"><rect x="0.5" y="0.5" width="15" height="15" fill="#fff" stroke="#a8b0b8"/><path d="M0.5 5.5h15M0.5 10.5h15M5.5 0.5v15M10.5 0.5v15" stroke="#c0c8d0"/><path d="M4 4 L14 14 M14 4 L4 14" stroke="#e84a2a" stroke-width="3"/></svg>
<svg style="left:163px;top:321px" width="11" height="15" viewBox="0 0 11 15"><rect x="0.5" y="0.5" width="10" height="14" fill="#f2f2ee" stroke="#6a7868"/><rect x="1" y="1" width="9" height="4.5" fill="#7a9078"/><g fill="#4a544a"><rect x="2" y="7" width="1.5" height="1.3"/><rect x="4" y="7" width="1.5" height="1.3"/><rect x="6" y="7" width="1.5" height="1.3"/><rect x="8" y="7" width="1.5" height="1.3"/><rect x="2" y="9.3" width="1.5" height="1.3"/><rect x="4" y="9.3" width="1.5" height="1.3"/><rect x="6" y="9.3" width="1.5" height="1.3"/><rect x="8" y="9.3" width="1.5" height="1.3"/><rect x="2" y="11.6" width="1.5" height="1.3"/><rect x="4" y="11.6" width="1.5" height="1.3"/><rect x="6" y="11.6" width="1.5" height="1.3"/><rect x="8" y="11.6" width="1.5" height="1.3"/></g></svg>
<svg style="left:184px;top:320px" width="17" height="16" viewBox="0 0 17 16"><circle cx="4.5" cy="3" r="2.3" fill="#e8b890"/><path d="M1 6h7v5H6.5v5h-4v-5H1z" fill="#3a9a3a"/><rect x="2.5" y="11" width="4" height="5" fill="#2a4a8a"/><path d="M8 4h5V1.5l4 3.5-4 3.5V6H8z" fill="#2aa02a"/><ellipse cx="13" cy="11.5" rx="3.5" ry="1.5" fill="#f4d020" stroke="#a88a10" stroke-width="0.6"/><ellipse cx="13" cy="14" rx="3.5" ry="1.5" fill="#f4d020" stroke="#a88a10" stroke-width="0.6"/></svg>
<div class="a" style="left:205px;top:319px;width:2px;height:18px;border-left:1px solid #cdc6b2;border-right:1px solid #fffefa"></div>
<svg style="left:212px;top:320px" width="15" height="16" viewBox="0 0 15 16"><circle cx="5" cy="2.5" r="2.2" fill="#d8a070"/><path d="M1.5 5.5h7v6H7v4.5H3v-4.5H1.5z" fill="#3a6ab0"/><path d="M5 8 L13 15 M13 6 L6 15" stroke="#e02020" stroke-width="1.8"/></svg>
<div class="a" style="top:321px;font-size:12px;line-height:14px;color:#2a2a2a;transform:scaleX(0.917);transform-origin:left top;left:230px;">=0</div>
<div class="a" style="top:321px;font-size:12px;line-height:14px;color:#2a2a2a;transform:scaleX(0.917);transform-origin:left top;left:251px;">Все действия</div>
<svg style="left:324px;top:327px" width="6" height="3" viewBox="0 0 6 3"><path d="M0 0h6L3 3z" fill="#4a4a4a"/></svg>
<div class="a" style="left:16px;top:347px;width:319px;height:358px;background:#fff;border:1px solid #c8c8c4"></div>
<div class="a" style="left:17px;top:348px;width:317px;height:20px;background:linear-gradient(#f4efe0,#efe9d6);border-bottom:1px solid #d0cab8"></div>
<div class="a" style="left:80px;top:348px;width:1px;height:20px;background:#d6d0bc"></div>
<div class="a" style="left:239px;top:348px;width:1px;height:20px;background:#d6d0bc"></div>
<div class="a" style="top:351px;font-size:12px;line-height:14px;color:#3a3420;transform:scaleX(0.917);transform-origin:left top;left:22px;">N</div>
<div class="a" style="top:351px;font-size:12px;line-height:14px;color:#3a3420;transform:scaleX(0.917);transform-origin:left top;left:85px;">Сотрудник</div>
<div class="a" style="top:351px;font-size:12px;line-height:14px;color:#3a3420;transform:scaleX(0.917);transform-origin:left top;left:244px;">Номер справки</div>
<div class="a" style="left:17px;top:368px;width:63px;height:19px;background:#6a93cb"></div>
<div class="a" style="left:80px;top:368px;width:254px;height:19px;background:#c6def8"></div>
<div class="a" style="left:17px;top:387px;width:317px;height:1px;background:#d8d8d8"></div>
<div class="a" style="left:80px;top:368px;width:1px;height:19px;background:#d8d8d8"></div>
<div class="a" style="left:239px;top:368px;width:1px;height:19px;background:#d8d8d8"></div>
<div class="a" style="top:372px;font-size:12px;line-height:14px;color:#fff;transform:scaleX(0.917);transform-origin:right top;right:998px;">1</div>
<div class="a" style="top:372px;font-size:12px;line-height:14px;color:#1c1c1c;transform:scaleX(0.917);transform-origin:left top;left:85px;">Петров П.П.</div>
<div class="a" style="left:17px;top:406px;width:317px;height:1px;background:#d8d8d8"></div>
<div class="a" style="left:80px;top:387px;width:1px;height:19px;background:#d8d8d8"></div>
<div class="a" style="left:239px;top:387px;width:1px;height:19px;background:#d8d8d8"></div>
<div class="a" style="top:391px;font-size:12px;line-height:14px;color:#1c1c1c;transform:scaleX(0.917);transform-origin:right top;right:998px;">2</div>
<div class="a" style="top:391px;font-size:12px;line-height:14px;color:#1c1c1c;transform:scaleX(0.917);transform-origin:left top;left:85px;">Сидоров И.Н.</div>
<div class="a" style="left:17px;top:425px;width:317px;height:1px;background:#d8d8d8"></div>
<div class="a" style="left:80px;top:406px;width:1px;height:19px;background:#d8d8d8"></div>
<div class="a" style="left:239px;top:406px;width:1px;height:19px;background:#d8d8d8"></div>
<div class="a" style="top:410px;font-size:12px;line-height:14px;color:#1c1c1c;transform:scaleX(0.917);transform-origin:right top;right:998px;">3</div>
<div class="a" style="top:410px;font-size:12px;line-height:14px;color:#1c1c1c;transform:scaleX(0.917);transform-origin:left top;left:85px;">Иванов И.И.</div>
<div class="a" style="left:17px;top:444px;width:317px;height:1px;background:#d8d8d8"></div>
<div class="a" style="left:80px;top:425px;width:1px;height:19px;background:#d8d8d8"></div>
<div class="a" style="left:239px;top:425px;width:1px;height:19px;background:#d8d8d8"></div>
<div class="a" style="top:429px;font-size:12px;line-height:14px;color:#1c1c1c;transform:scaleX(0.917);transform-origin:right top;right:998px;">4</div>
<div class="a" style="top:429px;font-size:12px;line-height:14px;color:#1c1c1c;transform:scaleX(0.917);transform-origin:left top;left:85px;">Тараторкин А.В.</div>
<div class="a" style="left:17px;top:463px;width:317px;height:1px;background:#d8d8d8"></div>
<div class="a" style="left:80px;top:444px;width:1px;height:19px;background:#d8d8d8"></div>
<div class="a" style="left:239px;top:444px;width:1px;height:19px;background:#d8d8d8"></div>
<div class="a" style="top:448px;font-size:12px;line-height:14px;color:#1c1c1c;transform:scaleX(0.917);transform-origin:right top;right:998px;">5</div>
<div class="a" style="top:448px;font-size:12px;line-height:14px;color:#1c1c1c;transform:scaleX(0.917);transform-origin:left top;left:85px;">Борисов Д.Б.</div>
<div class="a" style="left:17px;top:482px;width:317px;height:1px;background:#d8d8d8"></div>
<div class="a" style="left:80px;top:463px;width:1px;height:19px;background:#d8d8d8"></div>
<div class="a" style="left:239px;top:463px;width:1px;height:19px;background:#d8d8d8"></div>
<div class="a" style="top:467px;font-size:12px;line-height:14px;color:#1c1c1c;transform:scaleX(0.917);transform-origin:right top;right:998px;">6</div>
<div class="a" style="top:467px;font-size:12px;line-height:14px;color:#1c1c1c;transform:scaleX(0.917);transform-origin:left top;left:85px;">Николаев И.И.</div>
<div class="a" style="left:17px;top:501px;width:317px;height:1px;background:#d8d8d8"></div>
<div class="a" style="left:80px;top:482px;width:1px;height:19px;background:#d8d8d8"></div>
<div class="a" style="left:239px;top:482px;width:1px;height:19px;background:#d8d8d8"></div>
<div class="a" style="top:486px;font-size:12px;line-height:14px;color:#1c1c1c;transform:scaleX(0.917);transform-origin:right top;right:998px;">7</div>
<div class="a" style="top:486px;font-size:12px;line-height:14px;color:#1c1c1c;transform:scaleX(0.917);transform-origin:left top;left:85px;">Парамонова З.Ф.</div>
<div class="a" style="left:17px;top:520px;width:317px;height:1px;background:#d8d8d8"></div>
<div class="a" style="left:80px;top:501px;width:1px;height:19px;background:#d8d8d8"></div>
<div class="a" style="left:239px;top:501px;width:1px;height:19px;background:#d8d8d8"></div>
<div class="a" style="top:505px;font-size:12px;line-height:14px;color:#1c1c1c;transform:scaleX(0.917);transform-origin:right top;right:998px;">8</div>
<div class="a" style="top:505px;font-size:12px;line-height:14px;color:#1c1c1c;transform:scaleX(0.917);transform-origin:left top;left:85px;">Кузнецова Е.С.</div>
<div class="a" style="left:343px;top:338px;width:719px;height:290px;border:1px solid #b2ac99;background:#fcf9ed"></div>
<div class="a" style="left:487px;top:318px;width:33px;height:20px;border:1px solid #b2ac99;border-bottom:none;border-radius:5px 5px 0 0;background:linear-gradient(#f0ead8,#e9e1c9)"></div>
<div class="a" style="top:322px;font-size:12px;line-height:14px;color:#2a2a2a;transform:scaleX(0.917);transform-origin:left top;left:497px;">9%</div>
<div class="a" style="left:526px;top:318px;width:39px;height:20px;border:1px solid #b2ac99;border-bottom:none;border-radius:5px 5px 0 0;background:linear-gradient(#f0ead8,#e9e1c9)"></div>
<div class="a" style="top:322px;font-size:12px;line-height:14px;color:#2a2a2a;transform:scaleX(0.917);transform-origin:left top;left:536px;">35%</div>
<div class="a" style="left:571px;top:318px;width:151px;height:20px;border:1px solid #b2ac99;border-bottom:none;border-radius:5px 5px 0 0;background:linear-gradient(#f0ead8,#e9e1c9)"></div>
<div class="a" style="top:322px;font-size:12px;line-height:14px;color:#2a2a2a;transform:scaleX(0.917);transform-origin:left top;left:580px;">Сведения об организации</div>
<div class="a" style="left:343px;top:317px;width:138px;height:22px;border:1px solid #b2ac99;border-bottom:none;border-radius:5px 5px 0 0;background:linear-gradient(#e9c98a 0,#f5e4b8 1px,#faf3df 3px,#fcf9ee 6px)"></div>
<div class="a" style="top:322px;font-size:12px;line-height:14px;color:#2a2a2a;transform:scaleX(0.917);transform-origin:left top;left:352px;">Справка по ставке 13%</div>
<div class="a" style="left:351px;top:367px;width:703px;height:254px;border:1px solid #b2ac99;background:#fcf9ed"></div>
<div class="a" style="left:492px;top:347px;width:58px;height:20px;border:1px solid #b2ac99;border-bottom:none;border-radius:5px 5px 0 0;background:linear-gradient(#f0ead8,#e9e1c9)"></div>
<div class="a" style="top:352px;font-size:12px;line-height:14px;color:#2a2a2a;transform:scaleX(0.917);transform-origin:left top;left:501px;">Вычеты</div>
<div class="a" style="left:556px;top:347px;width:91px;height:20px;border:1px solid #b2ac99;border-bottom:none;border-radius:5px 5px 0 0;background:linear-gradient(#f0ead8,#e9e1c9)"></div>
<div class="a" style="top:352px;font-size:12px;line-height:14px;color:#2a2a2a;transform:scaleX(0.917);transform-origin:left top;left:565px;">Сумма налога</div>
<div class="a" style="left:351px;top:346px;width:135px;height:22px;border:1px solid #b2ac99;border-bottom:none;border-radius:5px 5px 0 0;background:linear-gradient(#e9c98a 0,#f5e4b8 1px,#faf3df 3px,#fcf9ee 6px)"></div>
<div class="a" style="top:352px;font-size:12px;line-height:14px;color:#2a2a2a;transform:scaleX(0.917);transform-origin:left top;left:361px;">Доходы по ставке 13%</div>
<svg style="left:362px;top:378px" width="16" height="16" viewBox="0 0 16 16"><defs><radialGradient id="gp362" cx="40%" cy="30%" r="70%"><stop offset="0" stop-color="#eef6e6"/><stop offset="1" stop-color="#8cb87a"/></radialGradient></defs><circle cx="8" cy="8" r="7.4" fill="url(#gp362)" stroke="#7a9a6a" stroke-width="0.8"/><path d="M8 4v8M4 8h8" stroke="#fff" stroke-width="2.4"/></svg>
<div class="a" style="top:379px;font-size:12px;line-height:14px;color:#2a2a2a;transform:scaleX(0.917);transform-origin:left top;left:380px;">Добавить</div>
<div class="a" style="left:435px;top:378px;width:2px;height:18px;border-left:1px solid #cdc6b2;border-right:1px solid #fffefa"></div>
<svg style="left:443px;top:378px" width="16" height="16" viewBox="0 0 16 16"><path d="M0.5 0.5h7l3 3v10H0.5z" fill="#f4f6f8" stroke="#8a9aa8"/><path d="M2.5 4h5M2.5 6h5M2.5 8h4" stroke="#a8b4c0"/><circle cx="11" cy="11" r="4.5" fill="#8ab878" stroke="#5a8a4a" stroke-width="0.8"/><path d="M11 8.5v5M8.5 11h5" stroke="#fff" stroke-width="1.6"/></svg>
<svg style="left:467px;top:381px" width="12" height="12" viewBox="0 0 12 12"><path d="M1.5 1.5 L10.5 10.5 M10.5 1.5 L1.5 10.5" stroke="#e46e66" stroke-width="2.6"/></svg>
<div class="a" style="left:486px;top:378px;width:2px;height:18px;border-left:1px solid #cdc6b2;border-right:1px solid #fffefa"></div>
<svg style="left:494px;top:382px" width="13" height="11" viewBox="0 0 13 11"><path d="M6.5 0.5 L12.5 6 H9 V10.5 H4 V6 H0.5z" fill="#86c0ea" stroke="#3c6c9c" stroke-width="0.9"/></svg>
<svg style="left:517px;top:381px" width="13" height="11" viewBox="0 0 13 11"><path d="M6.5 10.5 L12.5 5 H9 V0.5 H4 V5 H0.5z" fill="#86c0ea" stroke="#3c6c9c" stroke-width="0.9"/></svg>
<div class="a" style="top:379px;font-size:12px;line-height:14px;color:#2a2a2a;transform:scaleX(0.917);transform-origin:right top;right:44px;">Все действия</div>
<svg style="left:1035px;top:385px" width="6" height="3" viewBox="0 0 6 3"><path d="M0 0h6L3 3z" fill="#4a4a4a"/></svg>
<div class="a" style="left:359px;top:405px;width:687px;height:209px;background:#fff;border:1px solid #c8c8c4"></div>
<div class="a" style="left:360px;top:406px;width:685px;height:20px;background:linear-gradient(#f4efe0,#efe9d6);border-bottom:1px solid #d0cab8"></div>
<div class="a" style="left:431px;top:406px;width:1px;height:20px;background:#d6d0bc"></div>
<div class="a" style="left:524px;top:406px;width:1px;height:20px;background:#d6d0bc"></div>
<div class="a" style="left:668px;top:406px;width:1px;height:20px;background:#d6d0bc"></div>
<div class="a" style="left:902px;top:406px;width:1px;height:20px;background:#d6d0bc"></div>
<div class="a" style="top:409px;font-size:12px;line-height:14px;color:#3a3420;transform:scaleX(0.917);transform-origin:left top;left:365px;">Месяц</div>
<div class="a" style="top:409px;font-size:12px;line-height:14px;color:#3a3420;transform:scaleX(0.917);transform-origin:left top;left:437px;">Вид дохода</div>
<div class="a" style="top:409px;font-size:12px;line-height:14px;color:#3a3420;transform:scaleX(0.917);transform-origin:left top;left:529px;">Сумма</div>
<div class="a" style="top:409px;font-size:12px;line-height:14px;color:#3a3420;transform:scaleX(0.917);transform-origin:left top;left:674px;">Вид вычета</div>
<div class="a" style="top:409px;font-size:12px;line-height:14px;color:#3a3420;transform:scaleX(0.917);transform-origin:left top;left:908px;">Сумма вычета</div>
<div class="a" style="left:360px;top:426px;width:71px;height:19px;background:#6a93cb"></div>
<div class="a" style="left:431px;top:426px;width:614px;height:19px;background:#c6def8"></div>
<div class="a" style="left:360px;top:445px;width:685px;height:1px;background:#d8d8d8"></div>
<div class="a" style="left:431px;top:426px;width:1px;height:19px;background:#d8d8d8"></div>
<div class="a" style="left:524px;top:426px;width:1px;height:19px;background:#d8d8d8"></div>
<div class="a" style="left:668px;top:426px;width:1px;height:19px;background:#d8d8d8"></div>
<div class="a" style="left:902px;top:426px;width:1px;height:19px;background:#d8d8d8"></div>
<div class="a" style="top:430px;font-size:12px;line-height:14px;color:#fff;transform:scaleX(0.917);transform-origin:right top;right:646px;">1</div>
<div class="a" style="top:430px;font-size:12px;line-height:14px;color:#1c1c1c;transform:scaleX(0.917);transform-origin:left top;left:436px;">2000</div>
<div class="a" style="top:430px;font-size:12px;line-height:14px;color:#1c1c1c;transform:scaleX(0.917);transform-origin:right top;right:409px;">18 720,00</div>
<div class="a" style="top:430px;font-size:12px;line-height:14px;color:#1c1c1c;transform:scaleX(0.917);transform-origin:left top;left:673px;"></div>
<div class="a" style="top:430px;font-size:12px;line-height:14px;color:#1c1c1c;transform:scaleX(0.917);transform-origin:right top;right:30px;"></div>
<div class="a" style="left:360px;top:464px;width:685px;height:1px;background:#d8d8d8"></div>
<div class="a" style="left:431px;top:445px;width:1px;height:19px;background:#d8d8d8"></div>
<div class="a" style="left:524px;top:445px;width:1px;height:19px;background:#d8d8d8"></div>
<div class="a" style="left:668px;top:445px;width:1px;height:19px;background:#d8d8d8"></div>
<div class="a" style="left:902px;top:445px;width:1px;height:19px;background:#d8d8d8"></div>
<div class="a" style="top:449px;font-size:12px;line-height:14px;color:#1c1c1c;transform:scaleX(0.917);transform-origin:right top;right:646px;">2</div>
<div class="a" style="top:449px;font-size:12px;line-height:14px;color:#1c1c1c;transform:scaleX(0.917);transform-origin:left top;left:436px;">2000</div>
<div class="a" style="top:449px;font-size:12px;line-height:14px;color:#1c1c1c;transform:scaleX(0.917);transform-origin:right top;right:409px;">22 464,00</div>
<div class="a" style="top:449px;font-size:12px;line-height:14px;color:#1c1c1c;transform:scaleX(0.917);transform-origin:left top;left:673px;"></div>
<div class="a" style="top:449px;font-size:12px;line-height:14px;color:#1c1c1c;transform:scaleX(0.917);transform-origin:right top;right:30px;"></div>
<div class="a" style="left:360px;top:483px;width:685px;height:1px;background:#d8d8d8"></div>
<div class="a" style="left:431px;top:464px;width:1px;height:19px;background:#d8d8d8"></div>
<div class="a" style="left:524px;top:464px;width:1px;height:19px;background:#d8d8d8"></div>
<div class="a" style="left:668px;top:464px;width:1px;height:19px;background:#d8d8d8"></div>
<div class="a" style="left:902px;top:464px;width:1px;height:19px;background:#d8d8d8"></div>
<div class="a" style="top:468px;font-size:12px;line-height:14px;color:#1c1c1c;transform:scaleX(0.917);transform-origin:right top;right:646px;">3</div>
<div class="a" style="top:468px;font-size:12px;line-height:14px;color:#1c1c1c;transform:scaleX(0.917);transform-origin:left top;left:436px;">2000</div>
<div class="a" style="top:468px;font-size:12px;line-height:14px;color:#1c1c1c;transform:scaleX(0.917);transform-origin:right top;right:409px;">24 864,00</div>
<div class="a" style="top:468px;font-size:12px;line-height:14px;color:#1c1c1c;transform:scaleX(0.917);transform-origin:left top;left:673px;"></div>
<div class="a" style="top:468px;font-size:12px;line-height:14px;color:#1c1c1c;transform:scaleX(0.917);transform-origin:right top;right:30px;"></div>
<div class="a" style="left:360px;top:502px;width:685px;height:1px;background:#d8d8d8"></div>
<div class="a" style="left:431px;top:483px;width:1px;height:19px;background:#d8d8d8"></div>
<div class="a" style="left:524px;top:483px;width:1px;height:19px;background:#d8d8d8"></div>
<div class="a" style="left:668px;top:483px;width:1px;height:19px;background:#d8d8d8"></div>
<div class="a" style="left:902px;top:483px;width:1px;height:19px;background:#d8d8d8"></div>
<div class="a" style="top:487px;font-size:12px;line-height:14px;color:#1c1c1c;transform:scaleX(0.917);transform-origin:right top;right:646px;">3</div>
<div class="a" style="top:487px;font-size:12px;line-height:14px;color:#1c1c1c;transform:scaleX(0.917);transform-origin:left top;left:436px;">2760</div>
<div class="a" style="top:487px;font-size:12px;line-height:14px;color:#1c1c1c;transform:scaleX(0.917);transform-origin:right top;right:409px;">5 000,00</div>
<div class="a" style="top:487px;font-size:12px;line-height:14px;color:#1c1c1c;transform:scaleX(0.917);transform-origin:left top;left:673px;">Вычет из материальной помощи</div>
<div class="a" style="top:487px;font-size:12px;line-height:14px;color:#1c1c1c;transform:scaleX(0.917);transform-origin:right top;right:30px;">4 000,00</div>
<div class="a" style="left:360px;top:521px;width:685px;height:1px;background:#d8d8d8"></div>
<div class="a" style="left:431px;top:502px;width:1px;height:19px;background:#d8d8d8"></div>
<div class="a" style="left:524px;top:502px;width:1px;height:19px;background:#d8d8d8"></div>
<div class="a" style="left:668px;top:502px;width:1px;height:19px;background:#d8d8d8"></div>
<div class="a" style="left:902px;top:502px;width:1px;height:19px;background:#d8d8d8"></div>
<div class="a" style="top:506px;font-size:12px;line-height:14px;color:#1c1c1c;transform:scaleX(0.917);transform-origin:right top;right:646px;">4</div>
<div class="a" style="top:506px;font-size:12px;line-height:14px;color:#1c1c1c;transform:scaleX(0.917);transform-origin:left top;left:436px;">2000</div>
<div class="a" style="top:506px;font-size:12px;line-height:14px;color:#1c1c1c;transform:scaleX(0.917);transform-origin:right top;right:409px;">22 464,00</div>
<div class="a" style="top:506px;font-size:12px;line-height:14px;color:#1c1c1c;transform:scaleX(0.917);transform-origin:left top;left:673px;"></div>
<div class="a" style="top:506px;font-size:12px;line-height:14px;color:#1c1c1c;transform:scaleX(0.917);transform-origin:right top;right:30px;"></div>
<div class="a" style="top:637px;font-size:12px;line-height:14px;color:#2a2a2a;transform:scaleX(0.917);transform-origin:left top;left:344px;">Уникальный идентификатор:</div>
<div class="a" style="left:495px;top:635px;width:246px;height:18px;border:1px solid #b9b19a;border-top-color:#a39b84;border-radius:3px;background:#fff;box-shadow:inset 1px 1px 1px #ece8dc"></div>
<div class="a" style="top:637px;font-size:12px;line-height:14px;color:#1c1c1c;transform:scaleX(0.886739);transform-origin:left top;left:499px;">122ab675-60db-4031-bdf6-67a201d99f66</div>
<div class="a" style="left:725px;top:636px;width:15px;height:16px;border-left:1px solid #b9b19a;background:linear-gradient(#fbf8ee,#efe8d2);border-radius:0 2px 2px 0;"></div>
<svg style="left:727px;top:638px" width="12" height="12" viewBox="0 0 12 12"><circle cx="5" cy="5" r="3.5" fill="#fff8e0" stroke="#3a3020" stroke-width="1.3"/><path d="M7.5 7.5 L11 11" stroke="#3a3020" stroke-width="1.8"/></svg>
<div class="a" style="left:751px;top:636px;width:24px;height:18px;border:1px solid #aaa69a;border-radius:3px;background:linear-gradient(#fbfcf4,#eef2e2)"></div>
<svg style="left:756.5px;top:639.5px" width="15" height="12" viewBox="0 0 15 12"><ellipse cx="7.5" cy="6" rx="3.5" ry="3.2" fill="#d8f0c8"/><path d="M5 2.6 Q10.5 1.2 12.3 6.5" fill="none" stroke="#3a5a2a" stroke-width="1.4"/><path d="M9.8 6 H15 L12.4 9.6z" fill="#3a5a2a"/><path d="M3.4 6.5 Q4.5 10.6 10.3 9.6" fill="none" stroke="#3a5a2a" stroke-width="1.4"/><path d="M0.6 7 H5.8 L3.3 3.6z" fill="#3a5a2a"/></svg>
<div class="a" style="top:662px;font-size:12px;line-height:14px;color:#2a2a2a;transform:scaleX(0.917);transform-origin:left top;left:344px;">Каталог выгрузки:</div>
<div class="a" style="left:495px;top:659px;width:342px;height:19px;border:1px solid #b9b19a;border-top-color:#a39b84;border-radius:3px;background:#fff;box-shadow:inset 1px 1px 1px #ece8dc"></div>
<div class="a" style="top:662px;font-size:12px;line-height:14px;color:#1c1c1c;transform:scaleX(0.917);transform-origin:left top;left:499px;">C:\</div>
<div class="a" style="left:821px;top:660px;width:15px;height:17px;border-left:1px solid #b9b19a;background:linear-gradient(#fbf8ee,#efe8d2);border-radius:0 2px 2px 0;"></div>
<svg style="left:823px;top:671px" width="12" height="3" viewBox="0 0 12 3"><rect x="1" y="0" width="2" height="2" fill="#3a3020"/><rect x="5" y="0" width="2" height="2" fill="#3a3020"/><rect x="9" y="0" width="2" height="2" fill="#3a3020"/></svg>
<div class="a" style="left:847px;top:660px;width:128px;height:19px;border:1px solid #c0b69a;border-radius:3px;background:linear-gradient(#fcfaf2,#ece5cf)"></div>
<div class="a" style="top:663px;font-size:12px;line-height:14px;color:#2a2a2a;transform:scaleX(0.887656);transform-origin:left top;left:860px;">Сформировать файл</div>
<div class="a" style="top:688px;font-size:12px;line-height:14px;color:#2a2a2a;transform:scaleX(0.917);transform-origin:left top;left:344px;">Комментарий:</div>
<div class="a" style="left:495px;top:685px;width:344px;height:19px;border:1px solid #b9b19a;border-top-color:#a39b84;border-radius:3px;background:#fff;box-shadow:inset 1px 1px 1px #ece8dc"></div>
<div class="a" style="top:688px;font-size:12px;line-height:14px;color:#2a2a2a;transform:scaleX(0.917);transform-origin:left top;left:847px;">Автор:</div>
<div class="a" style="top:688px;font-size:12px;line-height:14px;color:#1a2a78;transform:scaleX(0.8959090000000001);transform-origin:left top;left:896px;">Петров А.С. (Расчетчик)</div>
</body></html>
